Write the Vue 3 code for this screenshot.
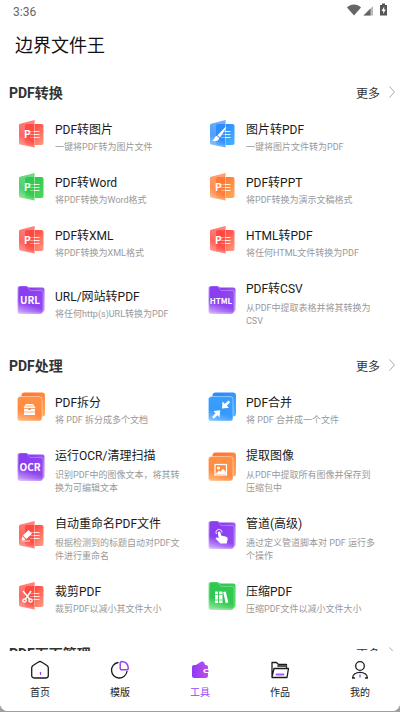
<script setup>
const sections = [
  {
    title: 'PDF转换',
    items: [
      { title: 'PDF转图片', desc: '一键将PDF转为图片文件', shape: 'book', color: 'red', glyph: 'p' },
      { title: '图片转PDF', desc: '一键将图片文件转为PDF', shape: 'book', color: 'blue', glyph: 'brush' },
      { title: 'PDF转Word', desc: '将PDF转换为Word格式', shape: 'book', color: 'green', glyph: 'p' },
      { title: 'PDF转PPT', desc: '将PDF转换为演示文稿格式', shape: 'book', color: 'orange', glyph: 'p' },
      { title: 'PDF转XML', desc: '将PDF转换为XML格式', shape: 'book', color: 'red', glyph: 'p' },
      { title: 'HTML转PDF', desc: '将任何HTML文件转换为PDF', shape: 'book', color: 'red', glyph: 'p' },
      { title: 'URL/网站转PDF', desc: '将任何http(s)URL转换为PDF', shape: 'folder', color: 'purple', label: 'URL', size: 10 },
      { title: 'PDF转CSV', desc: '从PDF中提取表格并将其转换为CSV', shape: 'folder', color: 'purple', label: 'HTML', size: 8, long: true },
    ],
  },
  {
    title: 'PDF处理',
    items: [
      { title: 'PDF拆分', desc: '将 PDF 拆分成多个文档', shape: 'stack', color: 'orange', glyph: 'case' },
      { title: 'PDF合并', desc: '将 PDF 合并成一个文件', shape: 'stack', color: 'blue', glyph: 'merge' },
      { title: '运行OCR/清理扫描', desc: '识别PDF中的图像文本，将其转换为可编辑文本', shape: 'folder', color: 'purple', label: 'OCR', size: 10, long: true },
      { title: '提取图像', desc: '从PDF中提取所有图像并保存到压缩包中', shape: 'stack', color: 'orange', glyph: 'image', long: true },
      { title: '自动重命名PDF文件', desc: '根据检测到的标题自动对PDF文件进行重命名', shape: 'book', color: 'red', glyph: 'pen', long: true },
      { title: '管道(高级)', desc: '通过定义管道脚本对 PDF 运行多个操作', shape: 'folder', color: 'purple', glyph: 'hand', long: true },
      { title: '裁剪PDF', desc: '裁剪PDF以减小其文件大小', shape: 'book', color: 'red', glyph: 'scissors' },
      { title: '压缩PDF', desc: '压缩PDF文件以减小文件大小', shape: 'folder', color: 'green', glyph: 'books' },
    ],
  },
  { title: 'PDF页面管理', items: [] },
]

const palette = {
  red: ['#ff4a43', '#ff9c80', '#ffaaa2'],
  blue: ['#2f8dfb', '#45b4ff', '#9bd2ff'],
  green: ['#2fc850', '#4fd75c', '#a5efa8'],
  orange: ['#ff7a35', '#ffad5a', '#ffc795'],
  purple: ['#8b3df0', '#b98cf8', '#dcc0fd'],
}

const tabs = [
  { name: 'home', label: '首页' },
  { name: 'template', label: '模版' },
  { name: 'tools', label: '工具', active: true },
  { name: 'works', label: '作品' },
  { name: 'me', label: '我的' },
]
</script>

<template>
  <div class="app">
    <svg class="defs" width="0" height="0" aria-hidden="true">
      <defs>
        <linearGradient v-for="(c, name) in palette" :id="'g-' + name" :key="name" x1="0" y1="0" x2="1" y2="1">
          <stop offset="0.3" :stop-color="c[0]" />
          <stop offset="1" :stop-color="c[1]" />
        </linearGradient>
        <linearGradient v-for="(c, name) in palette" :id="'f-' + name" :key="name" x1="0.300" y1="0" x2="0" y2="1">
          <stop offset="0" :stop-color="c[0]" stop-opacity="0.700" />
          <stop offset="0.550" :stop-color="c[0]" stop-opacity="0.850" />
          <stop offset="1" :stop-color="c[2]" stop-opacity="0.950" />
        </linearGradient>
        <linearGradient id="g-wallet" x1="0" y1="0" x2="1" y2="0">
          <stop offset="0" stop-color="#8a3cf5" />
          <stop offset="1" stop-color="#c44be8" />
        </linearGradient>
      </defs>
    </svg>

    <div class="status">
      <span>3:36</span>
      <svg width="42" height="14" viewBox="0 0 42 14" aria-hidden="true">
        <path d="M1 4.500C4.500 0.500 11.500 0.500 15 4.500L8 12.500Z" fill="#666" />
        <path d="M17.500 12.500L27 3V12.500Z" fill="#bbb" />
        <path d="M17.500 12.500L24.500 5.500V12.500Z" fill="#666" />
        <path d="M34 2H36V0.500H39V2H41V12.500H34Z" fill="#555" />
        <path d="M38.200 3.500L35.500 8H37.200V11L39.800 6.500H38.200Z" fill="#fff" />
      </svg>
    </div>
    <header class="toolbar"><h1>边界文件王</h1></header>

    <main class="content">
      <section v-for="s in sections" :key="s.title" class="section">
        <div class="section-head">
          <h2>{{ s.title }}</h2>
          <a href="#" class="more">更多
            <svg width="8" height="14" viewBox="0 0 8 14" aria-hidden="true">
              <path d="M1.500 1.500L6.500 7L1.500 12.500" fill="none" stroke="#aaa" />
            </svg>
          </a>
        </div>
        <div class="grid">
          <a v-for="i in s.items" :key="i.title" href="#" class="item">
            <svg class="icon" width="30" height="30" viewBox="0 0 30 30" aria-hidden="true">
              <g v-if="i.shape === 'book'">
                <rect x="8" y="5" width="18.500" height="21" rx="2" :fill="`url(#g-${i.color})`" />
                <path d="M2 6Q2 5 3 4.700L17.500 1V28.500L3 25.500Q2 25.200 2 24Z" :fill="`url(#f-${i.color})`" />
                <path d="M17.500 1V28.500" :stroke="palette[i.color][2]" stroke-width="0.800" />
                <path d="M17 12.500H22.500M17 15.500H22.500M17 18.500H22.500" stroke="#fff" stroke-opacity="0.850" />
                <path d="M13 12.500H17M13 15.500H17M13 18.500H17" stroke="#fff" stroke-opacity="0.400" />
              </g>
              <g v-else-if="i.shape === 'folder'">
                <path d="M2 3Q2 1 4 1H9.500L12 2.500H25.500Q27.500 2.500 27.500 4.500V24Q27.500 27 25 27H4Q2 27 2 25Z" :fill="`url(#g-${i.color})`" />
                <path d="M0.500 3Q0.500 1 2.500 1H9.500L13 5.500H24Q26 5.500 26 7.500V26Q26 29 23 29H3Q0.500 29 0.500 26.500Z" :fill="`url(#f-${i.color})`" />
                <path d="M3 1H9.500L13 5.500H24Q26 5.500 26 7.500V26Q26 29 23 29H3Q0.500 29 0.500 26.500V3Q0.500 1 3 1" fill="none" stroke="#fff" stroke-opacity="0.350" stroke-width="0.800" />
              </g>
              <g v-else>
                <rect x="4.500" y="0.500" width="23.500" height="24" rx="3" :fill="`url(#g-${i.color})`" />
                <rect x="0.500" y="4.500" width="24.500" height="24.500" rx="3" :fill="palette[i.color][1]" />
                <rect x="0.500" y="4.500" width="24.500" height="24.500" rx="3" :fill="`url(#f-${i.color})`" fill-opacity="0.800" stroke="#fff" stroke-opacity="0.500" stroke-width="0.800" />
              </g>

              <text v-if="i.label" class="icon-label" x="13" y="19" :font-size="i.size" text-anchor="middle">{{ i.label }}</text>
              <text v-else-if="i.glyph === 'p'" class="icon-label" x="7" y="19" font-size="10">P</text>
              <g v-else-if="i.glyph === 'brush'" fill="#fff">
                <path d="M17.500 8L18.300 8.800L12 18.500L9.500 16.300Z" />
                <path d="M8.800 16.800L11.300 19.200C10.500 22 7.500 22.700 4 21.800C6.500 21 6 17.500 8.800 16.800Z" />
              </g>
              <g v-else-if="i.glyph === 'pen'" fill="#fff">
                <path d="M11.500 10L15 13.500L9.500 19L6 15.500Z" />
                <path d="M5.400 16.300L8.700 19.500L4.500 20.500Z" />
                <path d="M5 21H13" stroke="#fff" stroke-width="0.800" />
              </g>
              <g v-else-if="i.glyph === 'scissors'" fill="none" stroke="#fff" stroke-width="1.500">
                <path d="M6 10L12.500 18M14 10L8.500 18" />
                <circle cx="7.500" cy="19.500" r="1.600" /><circle cx="13.500" cy="19.500" r="1.600" />
              </g>
              <g v-else-if="i.glyph === 'case'" fill="#fff">
                <path d="M9 12H16L18.500 16H6.500Z" />
                <path d="M7 16.800H11.200V18H13.800V16.800H18V23H7Z" />
                <path d="M9 14H16M7 20H18" :stroke="palette[i.color][0]" stroke-width="0.600" />
              </g>
              <g v-else-if="i.glyph === 'merge'" fill="#fff">
                <path d="M20.500 8.500L22.200 10.200L18.800 13.700L21 15.800L14 16.500L14.500 9.500L16.800 11.800Z" />
                <path d="M4 25L5.800 26.700L9.400 23.200L11.500 25.300L12.200 18.300L5.300 19L7.500 21.300Z" />
              </g>
              <g v-else-if="i.glyph === 'image'" fill="none" stroke="#fff" stroke-width="1.200">
                <rect x="7" y="12.500" width="11.500" height="10.500" />
                <circle cx="10.500" cy="16" r="1" fill="#fff" />
                <path d="M8 21.500L11 19L12.500 20L15 17L17.800 20V22H8Z" fill="#fff" stroke-width="0.500" />
              </g>
              <g v-else-if="i.glyph === 'hand'">
                <path d="M11 11.500C12.200 11.300 12.500 12.200 12.600 13L13.200 15.500L17.500 16.500C19.500 17 20 18 19.500 20L18.700 23.500H12.500L7.500 18.500C8 17.300 9.200 17.300 10.700 18.200L9.800 13C9.600 12 10.200 11.600 11 11.500Z" fill="#fff" />
                <path d="M8.500 14A3 3 0 1 1 14 12.500" fill="none" stroke="#fff" stroke-width="0.900" />
              </g>
              <g v-else-if="i.glyph === 'books'" fill="#fff">
                <rect x="7" y="10.500" width="3" height="11.500" rx="0.500" />
                <rect x="11" y="10.500" width="3.500" height="11.500" rx="0.500" />
                <path d="M15.200 11L17.800 10.500L20.300 21.500L17.600 22.100Z" />
                <path d="M7 19H14.500M7 13.500H14.500" :stroke="palette[i.color][0]" stroke-width="0.700" />
              </g>
            </svg>
            <span class="text">
              <span class="title">{{ i.title }}</span>
              <span class="desc" :class="{ long: i.long }">{{ i.desc }}</span>
            </span>
          </a>
        </div>
      </section>
    </main>

    <nav class="tabs">
      <a v-for="t in tabs" :key="t.name" href="#" class="tab" :class="{ active: t.active }">
        <svg width="20" height="20" viewBox="0 0 20 20" fill="none" stroke="#1c1c1c" stroke-width="1.300" stroke-linejoin="round" stroke-linecap="round" aria-hidden="true">
          <template v-if="t.name === 'home'">
            <path d="M8.500 2Q10 1 11.500 2L17 5.500Q18.300 6.500 18.300 8V15.500Q18.300 18 15.800 18H4.200Q1.700 18 1.700 15.500V8Q1.700 6.500 3 5.500Z" />
            <path d="M10.500 12.500V14.500" stroke="#9a45f5" />
          </template>
          <template v-else-if="t.name === 'template'">
            <path d="M8 2.500A7.800 7.800 0 1 0 17 11.500" />
            <path d="M10.200 3.200Q10.200 1.500 12 1.500C15.500 1.800 18 4.500 18.300 8Q18.300 9.800 16.500 9.800H12Q10.200 9.800 10.200 8Z" stroke="#9a45f5" stroke-width="1.500" />
          </template>
          <template v-else-if="t.name === 'tools'">
            <path d="M5 5.500L11.500 1.500Q13 1 14 2.500L15.500 5.500Z" fill="#a34cf6" stroke="none" />
            <path d="M4 5H16Q18 5 18 7V9H15.500Q13.300 9 13.300 11T15.500 13H18V15.500Q18 18 15.500 18H4.500Q2 18 2 15.500V7Q2 5 4 5Z" fill="url(#g-wallet)" stroke="none" />
            <path d="M16 10H18.500V12H16Q15 12 15 11T16 10Z" fill="#b848ee" stroke="none" />
          </template>
          <template v-else-if="t.name === 'works'">
            <path d="M2 17V2.500H6.500L8.500 4.500H16.500V7.500M2 17L4 8.500H18.500L17 17.500H2" />
            <path d="M8 6H16" stroke-width="1.800" stroke="#555" />
            <path d="M6.500 14.500H13.500" stroke="#a65cf7" stroke-width="1.800" />
          </template>
          <template v-else>
            <circle cx="10" cy="6" r="4.300" />
            <path d="M2.500 18C2.500 10.500 17.500 10.500 17.500 18M2.500 18H4.500M15.500 18H17.500" />
            <path d="M10 15V17" stroke="#9a45f5" />
          </template>
        </svg>
        <span>{{ t.label }}</span>
      </a>
    </nav>
  </div>
</template>

<style>
body { background: #a0a0a0; }
</style>

<style scoped>
.app {
  box-sizing: border-box;
  display: flex;
  flex-direction: column;
  height: calc(100vh - 1px);
  overflow: hidden;
  background: #fff;
  border-radius: 0 0 8px 8px;
  font-family: Roboto, "Noto Sans CJK SC", sans-serif;
  color: #222;
}
a { color: inherit; text-decoration: none; }
h1, h2 { margin: 0; }
.defs { position: absolute; }
.status {
  display: flex;
  flex: none;
  align-items: center;
  justify-content: space-between;
  height: 24px;
  padding: 0 12px 0 13px;
  font-size: 12px;
  color: #666;
}
.status svg { margin-bottom: 4px; }
.toolbar { flex: none; padding: 0 15px; }
.toolbar h1 { font-size: 18px; line-height: 44px; font-weight: 400; color: #111; }
.content { flex: 1; min-height: 0; overflow: hidden; padding-top: 9px; }
.section + .section { margin-top: 16px; }
.section-head {
  display: flex;
  align-items: center;
  justify-content: space-between;
  height: 30px;
  padding: 0 4px 0 9px;
}
.section-head h2 { font-size: 14px; font-weight: 700; color: #333; }
.more { display: flex; align-items: center; gap: 8px; font-size: 12px; color: #333; }
.grid { display: grid; grid-template-columns: 1fr 1fr; padding: 0 9px; }
.item { display: flex; align-items: center; gap: 8px; padding: 0 14px 0 8px; }
.icon { flex: none; }
.icon-label { font-family: "Noto Sans CJK SC", sans-serif; font-weight: 700; fill: #fff; }
.text { display: flex; flex-direction: column; padding: 13px 0 6px; min-width: 0; }
.title { font-size: 12px; line-height: 20px; color: #1a1a1a; }
.desc { margin-top: 1px; font-size: 9px; line-height: 13px; color: #999; }
.desc.long { margin-top: 3px; }
.tabs { display: flex; flex: none; height: 60px; background: #fff; }
.tab {
  display: flex;
  flex: 1;
  flex-direction: column;
  align-items: center;
  gap: 5px;
  padding-top: 9px;
  font-size: 10px;
  line-height: 16px;
}
.tab.active { color: #9a45f5; }
</style>
